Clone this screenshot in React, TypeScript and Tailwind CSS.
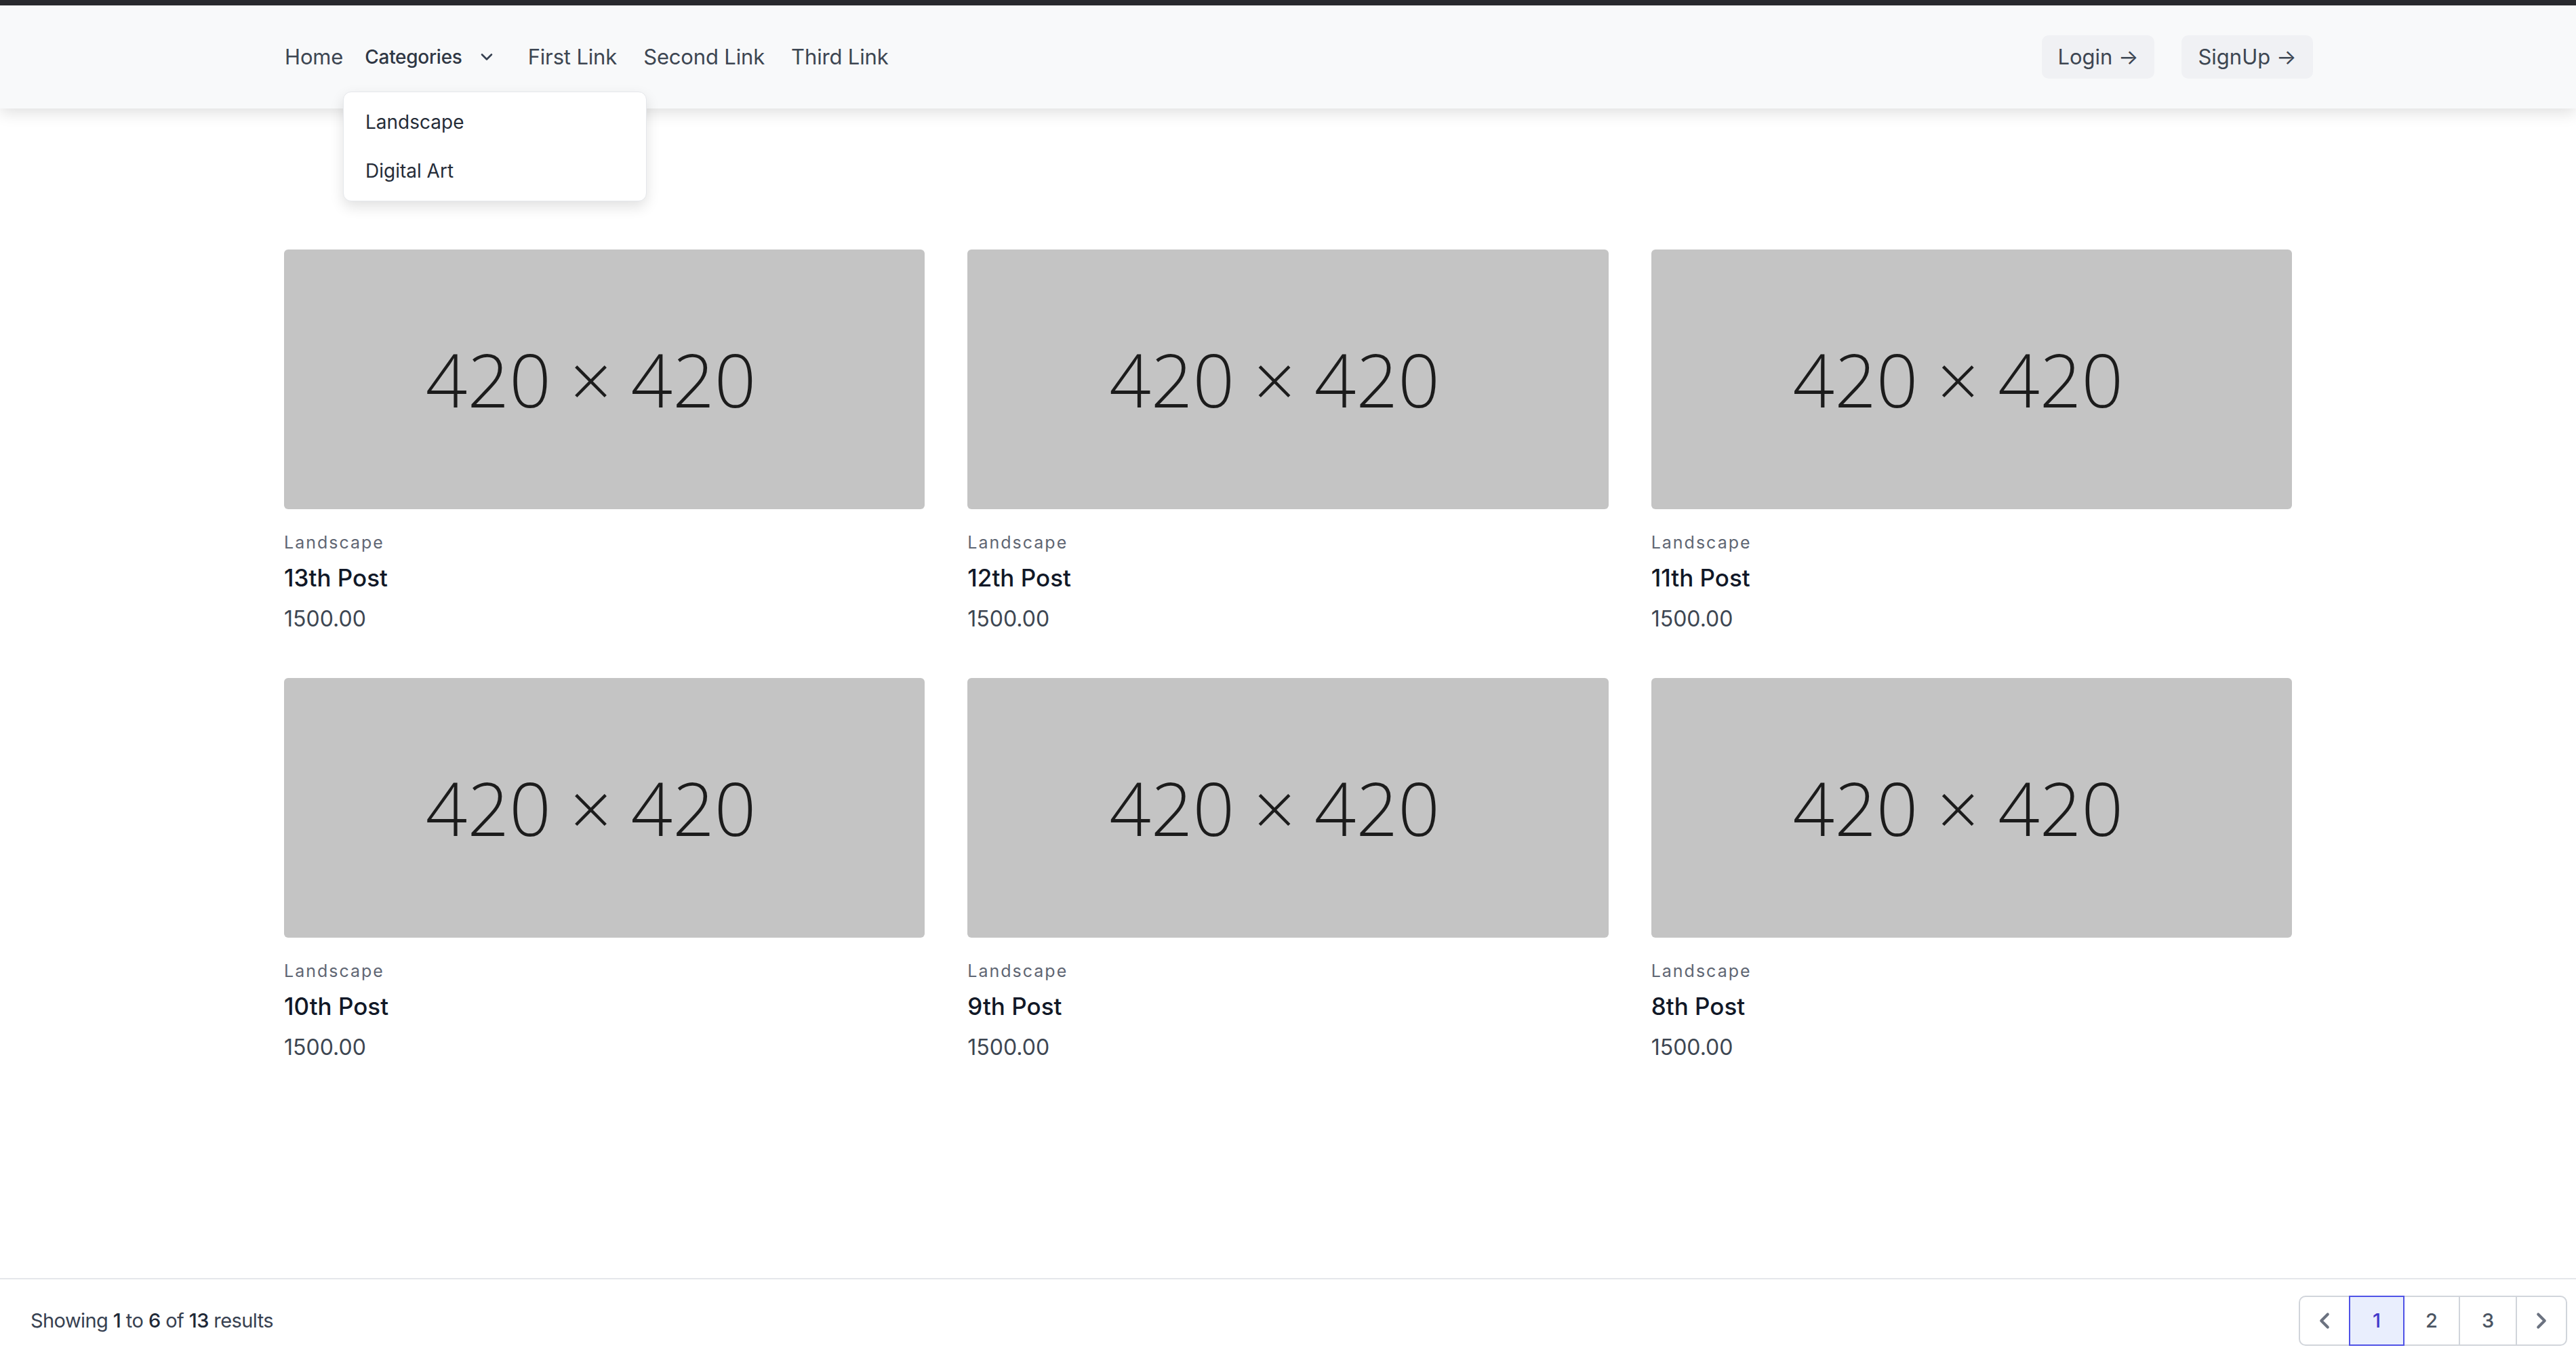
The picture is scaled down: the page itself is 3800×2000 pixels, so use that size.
import { ChevronLeft, ChevronRight } from "lucide-react"

const posts = ["13th Post", "12th Post", "11th Post", "10th Post", "9th Post", "8th Post"]

function Chevron() {
  return (
    <svg width="20" height="12" viewBox="0 0 20 12" fill="none" className="ml-[26px]">
      <path d="M3 2.5l7 7 7-7" stroke="#374151" strokeWidth="2.6" strokeLinecap="round" strokeLinejoin="round" />
    </svg>
  )
}

function Header() {
  return (
    <header className="relative z-10 h-[152px] bg-[#f8f9fa] shadow-[0_6px_22px_rgba(0,0,0,0.13)]">
      <div className="flex h-full items-center justify-between pl-[420px] pr-[388px]">
        <nav className="flex items-center text-[31px] tracking-[-0.005em] text-[#3d4652]">
          <a className="mr-[32px]">Home</a>
          <button className="mr-[51px] flex items-center text-[28px] font-medium tracking-[-0.01em] text-[#2f3744]">
            Categories
            <Chevron />
          </button>
          <a className="mr-[39px]">First Link</a>
          <a className="mr-[39px]">Second Link</a>
          <a>Third Link</a>
        </nav>
        <div className="flex items-center gap-[40px] text-[31px] text-[#3d4652]">
          <button className="flex h-[64px] w-[166px] items-center justify-center rounded-[10px] bg-[#f0f1f4]">
            Login →
          </button>
          <button className="flex h-[64px] w-[194px] items-center justify-center rounded-[10px] bg-[#f0f1f4]">
            SignUp →
          </button>
        </div>
      </div>

      <div className="absolute left-[506px] top-[127px] z-20 w-[448px] rounded-[12px] border border-[#e5e7eb] bg-white py-[8px] text-[28px] text-[#252c38] shadow-[0_8px_20px_rgba(0,0,0,0.12)]">
        <div className="flex h-[72px] items-center px-[32px]">Landscape</div>
        <div className="flex h-[72px] items-center px-[32px]">Digital Art</div>
      </div>
    </header>
  )
}

function Card({ title }: { title: string }) {
  return (
    <div className="flex flex-col">
      <div className="flex h-[383px] items-center justify-center overflow-hidden rounded-[6px] bg-[#c4c4c4] pr-[40px]">
        <span className="font-['Open_Sans',sans-serif] text-[108px] font-light leading-none text-[#1c1c1c]">
          420 × 420
        </span>
      </div>
      <p className="mt-[31px] text-[25px] leading-[36px] tracking-[0.08em] text-[#5f6673]">Landscape</p>
      <h3 className="mt-[10px] text-[35px] font-medium leading-[48px] text-[#111827]">{title}</h3>
      <p className="mt-[15px] text-[32px] leading-[44px] text-[#3d4652]">1500.00</p>
    </div>
  )
}

function Footer() {
  const cell = "flex h-[74px] items-center justify-center border-2 border-[#d1d5db] text-[29px] font-medium text-[#4b5563]"
  return (
    <footer className="mt-auto flex items-center justify-between border-t-2 border-[#e5e7eb] pb-[15px] pl-[45px] pr-[13px] pt-[24px]">
      <p className="text-[29px] tracking-[-0.02em] text-[#374151]">
        Showing <span className="font-medium text-[#1f2937]">1</span> to{" "}
        <span className="font-medium text-[#1f2937]">6</span> of{" "}
        <span className="font-medium text-[#1f2937]">13</span> results
      </p>
      <div className="flex">
        <button className={`${cell} w-[76px] rounded-l-[10px] text-[#6b7280]`}>
          <ChevronLeft size={38} strokeWidth={2.6} />
        </button>
        <button className="relative z-10 -ml-[2px] flex h-[74px] w-[82px] items-center justify-center border-2 border-[#4f52e6] bg-[#e9eefd] text-[29px] font-medium text-[#4338ca]">
          1
        </button>
        <button className={`${cell} -ml-[2px] w-[84px]`}>2</button>
        <button className={`${cell} -ml-[2px] w-[86px]`}>3</button>
        <button className={`${cell} -ml-[2px] w-[76px] rounded-r-[10px] text-[#6b7280]`}>
          <ChevronRight size={38} strokeWidth={2.6} />
        </button>
      </div>
    </footer>
  )
}

export default function App() {
  return (
    <div className="flex h-[2000px] w-full flex-col bg-white font-['Inter','Liberation_Sans',sans-serif]">
      <div className="h-[8px] bg-[#2a2b2f]" />
      <Header />
      <main className="pt-[208px]">
        <div className="mx-auto grid w-[2962px] grid-cols-3 gap-x-[63px] gap-y-[65px]">
          {posts.map((p) => (
            <Card key={p} title={p} />
          ))}
        </div>
      </main>
      <Footer />
    </div>
  )
}
